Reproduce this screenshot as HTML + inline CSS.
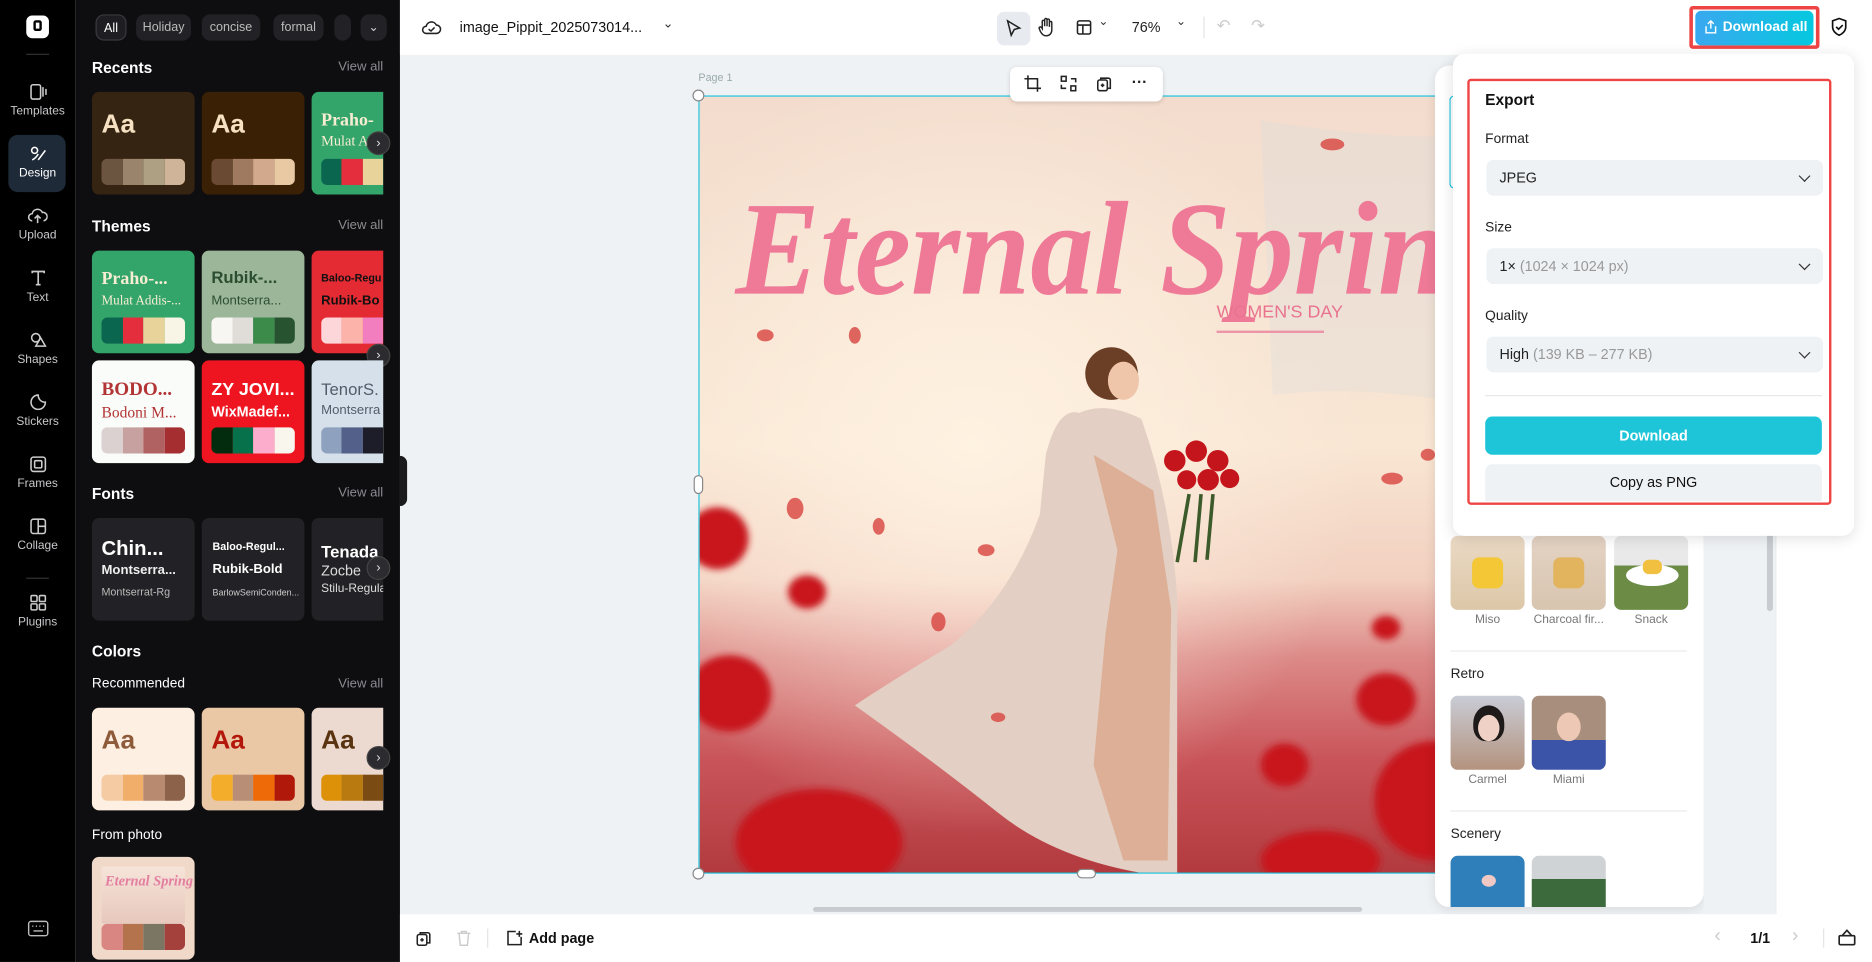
<!DOCTYPE html>
<html><head><meta charset="utf-8"><style>
*{box-sizing:border-box;margin:0;padding:0}
html,body{width:1872px;height:962px;overflow:hidden;background:#fff;font-family:"Liberation Sans",sans-serif}
#w{position:absolute;left:0;top:0;width:1568px;height:806px;transform:scale(1.19388,1.1935);transform-origin:0 0;background:#eff2f5;overflow:hidden}
.a{position:absolute}
.rail{left:0;top:0;width:63px;height:806px;background:#000}
.ri{position:absolute;left:0;width:63px;text-align:center;color:#c9c9cc;font-size:10px}
.ri svg{display:block;margin:0 auto 3px}
.pan{left:63px;top:0;width:272px;height:806px;background:#0e0e10;overflow:hidden}
.chip{position:absolute;top:12px;height:22px;border-radius:7px;background:#222226;color:#bbb;font-size:10.5px;line-height:22px;text-align:center}
.h{position:absolute;color:#fff;font-weight:bold;font-size:13px}
.va{position:absolute;right:14px;color:#8b8b92;font-size:11px}
.card{position:absolute;width:86px;height:86px;border-radius:6px;overflow:hidden}
.sw{position:absolute;left:8px;bottom:8px;width:70px;height:22px;border-radius:5px;overflow:hidden;display:flex}
.sw i{flex:1}
.arr{position:absolute;width:20px;height:20px;border-radius:50%;background:#2c2c30;border:1px solid #444;color:#ddd;font-size:11px;line-height:18px;text-align:center}
.top{left:335px;top:0;width:1233px;height:46px;background:#fff}
.bot{left:335px;top:766px;width:1233px;height:40px;background:#fff}
.sel{position:absolute;left:1245px;height:30px;width:282px;border-radius:6px;background:#eff2f5;font-size:12px;color:#222;line-height:30px;padding-left:11px}
.sel b{font-weight:normal;color:#999}
.sel:after{content:"";position:absolute;right:12px;top:10px;width:6px;height:6px;border-right:1.6px solid #333;border-bottom:1.6px solid #333;transform:rotate(45deg)}
.lbl{position:absolute;left:1244px;font-size:11.5px;color:#222}
.th{position:absolute;width:62px;height:62px;border-radius:6px}
.tl{position:absolute;width:62px;text-align:center;font-size:10px;color:#777}
</style></head><body><div id="w">

<div class="a rail">
 <div class="a" style="left:22px;top:13px;width:19px;height:19px;border-radius:5px;background:#fff"><div class="a" style="left:6px;top:4px;width:7px;height:9px;border:2px solid #000;border-radius:2px"></div></div>
 <div class="a" style="left:22px;top:45px;width:19px;height:1px;background:#333"></div>
 <div class="ri" style="top:69px"><svg width="16" height="16" viewBox="0 0 16 16" fill="none" stroke="#ccc" stroke-width="1.3"><rect x="2" y="2" width="8" height="12" rx="1.5"/><path d="M12 4v8M14.5 5.5v5"/></svg>Templates</div>
 <div class="a" style="left:7px;top:113px;width:48px;height:48px;border-radius:8px;background:#1e2a38"></div>
 <div class="ri" style="top:121px;color:#fff"><svg width="16" height="16" viewBox="0 0 16 16" fill="none" stroke="#fff" stroke-width="1.3"><circle cx="5" cy="5" r="2.5"/><path d="M8 13l6-8M3 13c2-1 4-3 5-5"/></svg>Design</div>
 <div class="ri" style="top:173px"><svg width="17" height="16" viewBox="0 0 17 16" fill="none" stroke="#ccc" stroke-width="1.3"><path d="M4 12a3 3 0 010-6 4.5 4.5 0 018.5-1 3 3 0 011 7M8.5 14V8M6 10l2.5-2.5L11 10"/></svg>Upload</div>
 <div class="ri" style="top:225px"><svg width="16" height="16" viewBox="0 0 16 16" fill="none" stroke="#ccc" stroke-width="1.4"><path d="M3 4V2.5h10V4M8 2.5v11M6 13.5h4"/></svg>Text</div>
 <div class="ri" style="top:277px"><svg width="16" height="16" viewBox="0 0 16 16" fill="none" stroke="#ccc" stroke-width="1.3"><circle cx="6" cy="6" r="3.5"/><path d="M10 6l4 7H6z"/></svg>Shapes</div>
 <div class="ri" style="top:329px"><svg width="16" height="16" viewBox="0 0 16 16" fill="none" stroke="#ccc" stroke-width="1.3"><path d="M8 2a6 6 0 106 6c-3 0-6-2-6-6z"/></svg>Stickers</div>
 <div class="ri" style="top:381px"><svg width="16" height="16" viewBox="0 0 16 16" fill="none" stroke="#ccc" stroke-width="1.3"><rect x="2" y="2" width="12" height="12" rx="2"/><rect x="5" y="5" width="6" height="6" rx="1"/></svg>Frames</div>
 <div class="ri" style="top:433px"><svg width="16" height="16" viewBox="0 0 16 16" fill="none" stroke="#ccc" stroke-width="1.3"><rect x="2" y="2" width="12" height="12" rx="2"/><path d="M8 2v12M8 8h6"/></svg>Collage</div>
 <div class="a" style="left:22px;top:484px;width:19px;height:1px;background:#333"></div>
 <div class="ri" style="top:497px"><svg width="16" height="16" viewBox="0 0 16 16" fill="none" stroke="#ccc" stroke-width="1.3"><rect x="2" y="2" width="5" height="5" rx="1"/><rect x="9" y="2" width="5" height="5" rx="1"/><rect x="2" y="9" width="5" height="5" rx="1"/><rect x="9" y="9" width="5" height="5" rx="1"/></svg>Plugins</div>
 <svg class="a" style="left:23px;top:771px" width="18" height="14" viewBox="0 0 18 14" fill="none" stroke="#bbb" stroke-width="1.2"><rect x="1" y="1" width="16" height="12" rx="2"/><path d="M4 5h1M7 5h1M10 5h1M13 5h1M5 9h8"/></svg>
</div>

<div class="a pan">
 <div class="chip" style="left:17px;width:26px;background:#1d1d22;border:1px solid #3a3a3e;color:#fff">All</div>
 <div class="chip" style="left:51px;width:46px">Holiday</div>
 <div class="chip" style="left:106px;width:49px">concise</div>
 <div class="chip" style="left:166px;width:42px">formal</div>
 <div class="chip" style="left:217px;width:14px"></div>
 <div class="chip" style="left:239px;width:22px;color:#ccc">&#8964;</div>
 <div class="h" style="left:14px;top:49px">Recents</div><div class="va" style="top:50px">View all</div>
 <div class="card" style="left:14px;top:77px;background:#362412"><div class="a" style="left:8px;top:14px;font-size:22px;font-weight:bold;color:#f6e2c2">Aa</div><div class="sw"><i style="background:#6b5440"></i><i style="background:#9a856c"></i><i style="background:#ada083"></i><i style="background:#d0b49a"></i></div></div>
 <div class="card" style="left:106px;top:77px;background:#3a2005"><div class="a" style="left:8px;top:14px;font-size:22px;font-weight:bold;color:#f6e2c2">Aa</div><div class="sw"><i style="background:#6b4a33"></i><i style="background:#a07a60"></i><i style="background:#d2a98c"></i><i style="background:#e8c9a4"></i></div></div>
 <div class="card" style="left:198px;top:77px;background:#34a56a;width:60px;border-radius:6px 0 0 6px"><div class="a" style="left:8px;top:16px;font:bold 15px 'Liberation Serif',serif;color:#f7edd3;white-space:nowrap">Praho-</div><div class="a" style="left:8px;top:34px;font:12px 'Liberation Serif',serif;color:#f7edd3;white-space:nowrap">Mulat Ad</div><div class="sw" style="width:52px;border-radius:5px 0 0 5px"><i style="background:#0a664e"></i><i style="background:#e52e3d"></i><i style="background:#e8d39a"></i></div></div>
 <div class="arr" style="left:244px;top:110px">&#8250;</div>
 <div class="h" style="left:14px;top:182px">Themes</div><div class="va" style="top:183px">View all</div>
 <div class="card" style="left:14px;top:210px;background:#34a56a"><div class="a" style="left:8px;top:16px;font:bold 15px 'Liberation Serif',serif;color:#f7edd3;white-space:nowrap">Praho-...</div><div class="a" style="left:8px;top:36px;font:11px 'Liberation Serif',serif;color:#f7edd3;white-space:nowrap">Mulat Addis-...</div><div class="sw"><i style="background:#0a664e"></i><i style="background:#e52e3d"></i><i style="background:#e8d39a"></i><i style="background:#f8f4e6"></i></div></div>
 <div class="card" style="left:106px;top:210px;background:#9cb69a"><div class="a" style="left:8px;top:14px;font-weight:bold;font-size:14px;color:#2c4e30;white-space:nowrap">Rubik-...</div><div class="a" style="left:8px;top:36px;font-size:11px;color:#2c4e30;white-space:nowrap">Montserra...</div><div class="sw"><i style="background:#f7f6f3"></i><i style="background:#e0ddd8"></i><i style="background:#3d8b4b"></i><i style="background:#275330"></i></div></div>
 <div class="card" style="left:198px;top:210px;background:#e42a33;width:60px;border-radius:6px 0 0 6px"><div class="a" style="left:8px;top:18px;font-weight:bold;font-size:9px;color:#111;white-space:nowrap">Baloo-Regu</div><div class="a" style="left:8px;top:36px;font-weight:bold;font-size:11px;color:#111;white-space:nowrap">Rubik-Bo</div><div class="sw" style="width:52px;border-radius:5px 0 0 5px"><i style="background:#fdd6d9"></i><i style="background:#fbb3aa"></i><i style="background:#f27ebf"></i></div></div>
 <div class="arr" style="left:244px;top:288px">&#8250;</div>
 <div class="card" style="left:14px;top:302px;background:#fafcfa"><div class="a" style="left:8px;top:16px;font:bold 16px 'Liberation Serif',serif;color:#b23434;white-space:nowrap">BODO...</div><div class="a" style="left:8px;top:36px;font:13px 'Liberation Serif',serif;color:#b23434;white-space:nowrap">Bodoni M...</div><div class="sw"><i style="background:#dbd1d0"></i><i style="background:#c6a19f"></i><i style="background:#b06263"></i><i style="background:#a52e31"></i></div></div>
 <div class="card" style="left:106px;top:302px;background:#ee1520"><div class="a" style="left:8px;top:16px;font-weight:bold;font-size:15px;color:#fff;white-space:nowrap">ZY JOVI...</div><div class="a" style="left:8px;top:36px;font-size:12px;color:#fff;white-space:nowrap;font-weight:bold">WixMadef...</div><div class="sw"><i style="background:#032c0e"></i><i style="background:#06714b"></i><i style="background:#fdadcc"></i><i style="background:#f9f6ee"></i></div></div>
 <div class="card" style="left:198px;top:302px;background:#d5e0ea;width:60px;border-radius:6px 0 0 6px"><div class="a" style="left:8px;top:16px;font-size:14px;color:#555b6a;white-space:nowrap">TenorS.</div><div class="a" style="left:8px;top:36px;font-size:11px;color:#555b6a;white-space:nowrap">Montserra</div><div class="sw" style="width:52px;border-radius:5px 0 0 5px"><i style="background:#8ea1bf"></i><i style="background:#536089"></i><i style="background:#1c1d28"></i></div></div>
 <div class="h" style="left:14px;top:406px">Fonts</div><div class="va" style="top:407px">View all</div>
 <div class="card" style="left:14px;top:434px;background:#222226"><div class="a" style="left:8px;top:16px;font-weight:bold;font-size:17px;color:#fff">Chin...</div><div class="a" style="left:8px;top:38px;font-size:11px;color:#eee;font-weight:bold">Montserra...</div><div class="a" style="left:8px;top:57px;font-size:9px;color:#bbb">Montserrat-Rg</div></div>
 <div class="card" style="left:106px;top:434px;background:#222226"><div class="a" style="left:9px;top:19px;font-weight:bold;font-size:9px;color:#fff">Baloo-Regul...</div><div class="a" style="left:9px;top:37px;font-weight:bold;font-size:11px;color:#fff">Rubik-Bold</div><div class="a" style="left:9px;top:58px;font-size:7.5px;color:#ccc">BarlowSemiConden...</div></div>
 <div class="card" style="left:198px;top:434px;background:#222226;width:60px;border-radius:6px 0 0 6px"><div class="a" style="left:8px;top:20px;font-weight:bold;font-size:14px;color:#fff;white-space:nowrap">Tenada</div><div class="a" style="left:8px;top:37px;font-size:12px;color:#ddd;white-space:nowrap">Zocbe</div><div class="a" style="left:8px;top:54px;font-size:10px;color:#ddd;white-space:nowrap">Stilu-Regula</div></div>
 <div class="arr" style="left:244px;top:466px">&#8250;</div>
 <div class="h" style="left:14px;top:538px">Colors</div>
 <div class="a" style="left:14px;top:567px;color:#fff;font-size:11.5px">Recommended</div><div class="va" style="top:567px">View all</div>
 <div class="card" style="left:14px;top:593px;background:#fdefe1"><div class="a" style="left:8px;top:14px;font-size:22px;font-weight:bold;color:#8d5a3a">Aa</div><div class="sw"><i style="background:#f5cba3"></i><i style="background:#f0ae6a"></i><i style="background:#b88a70"></i><i style="background:#8c624b"></i></div></div>
 <div class="card" style="left:106px;top:593px;background:#ebc8a5"><div class="a" style="left:8px;top:14px;font-size:22px;font-weight:bold;color:#b3170c">Aa</div><div class="sw"><i style="background:#f4ac2b"></i><i style="background:#b88f76"></i><i style="background:#ee6908"></i><i style="background:#b0190a"></i></div></div>
 <div class="card" style="left:198px;top:593px;background:#ecd9d0;width:60px;border-radius:6px 0 0 6px"><div class="a" style="left:8px;top:14px;font-size:22px;font-weight:bold;color:#5a3410">Aa</div><div class="sw" style="width:52px;border-radius:5px 0 0 5px"><i style="background:#dd9108"></i><i style="background:#b97b10"></i><i style="background:#7a4b13"></i></div></div>
 <div class="arr" style="left:244px;top:625px">&#8250;</div>
 <div class="a" style="left:14px;top:694px;color:#fff;font-size:11.5px">From photo</div>
 <div class="card" style="left:14px;top:718px;background:#f1d9c9"><div class="a" style="left:8px;top:8px;width:70px;height:48px;background:linear-gradient(#f6e4d9,#e7c8bd);border-radius:2px"></div><div class="a" style="left:11px;top:13px;font:italic bold 12px 'Liberation Serif',serif;color:#e37ea0">Eternal Spring</div><div class="sw"><i style="background:#d98682"></i><i style="background:#b4734c"></i><i style="background:#7a7663"></i><i style="background:#a5413c"></i></div></div>
</div>
<div class="a" style="left:335px;top:382px;width:6px;height:42px;background:#1b1b1e;border-radius:0 6px 6px 0"></div>

<div class="a top">
 <svg class="a" style="left:18px;top:15px" width="17" height="15" viewBox="0 0 17 15" fill="none" stroke="#222" stroke-width="1.3"><path d="M4 13a3 3 0 010-6 4.5 4.5 0 018.5-1 3 3 0 010 7z"/><path d="M6 9.5l2 1.5 3-3"/></svg>
 <div class="a" style="left:50px;top:16px;font-size:12px;color:#111">image_Pippit_2025073014...</div>
 <div class="a" style="left:220px;top:13px;font-size:11px;color:#333">&#8964;</div>
 <div class="a" style="left:500px;top:10px;width:28px;height:28px;border-radius:6px;background:#e7eaee"></div>
 <svg class="a" style="left:507px;top:16px" width="14" height="16" viewBox="0 0 14 16" fill="none" stroke="#222" stroke-width="1.3"><path d="M2 1.5l10 6-4.5 1.2L5 13.5z"/></svg>
 <svg class="a" style="left:534px;top:14px" width="16" height="18" viewBox="0 0 16 18" fill="none" stroke="#222" stroke-width="1.2"><path d="M4 10V4a1 1 0 012 0v4V2.5a1 1 0 012 0V8V3a1 1 0 012 0v5.5V5a1 1 0 012 0v6c0 3-2 5-4.5 5S4 15 2.5 12.5L1.5 10a1 1 0 012-.8z"/></svg>
 <svg class="a" style="left:566px;top:16px" width="14" height="14" viewBox="0 0 14 14" fill="none" stroke="#222" stroke-width="1.3"><rect x="1.5" y="1.5" width="11" height="11" rx="1.5"/><path d="M1.5 5h11M6 5v7.5"/></svg>
 <div class="a" style="left:585px;top:13px;font-size:10px;color:#333">&#8964;</div>
 <div class="a" style="left:613px;top:16px;font-size:12px;color:#222">76%</div>
 <div class="a" style="left:650px;top:13px;font-size:10px;color:#333">&#8964;</div>
 <div class="a" style="left:673px;top:14px;width:1px;height:18px;background:#e2e4e8"></div>
 <div class="a" style="left:684px;top:13px;font-size:14px;color:#ccc">&#8630;</div>
 <div class="a" style="left:713px;top:13px;font-size:14px;color:#ccc">&#8631;</div>
 <div class="a" style="left:1080px;top:5px;width:109px;height:36px;border:3px solid #ef4444;border-radius:3px"></div>
 <div class="a" style="left:1085px;top:9px;width:99px;height:29px;border-radius:5px;background:linear-gradient(90deg,#3aa8ef,#05c8df);color:#fff;font-size:11.5px;font-weight:bold;line-height:29px;padding-left:23px">Download all</div>
 <svg class="a" style="left:1092px;top:16px" width="12" height="13" viewBox="0 0 12 13" fill="none" stroke="#fff" stroke-width="1.2"><path d="M6 8V1.5M3.5 4L6 1.5 8.5 4M2 6v5.5h8V6"/></svg>
 <svg class="a" style="left:1198px;top:14px" width="15" height="17" viewBox="0 0 15 17" fill="none" stroke="#111" stroke-width="1.4"><path d="M7.5 1.5l5.5 2v5c0 3.5-3 6-5.5 7-2.5-1-5.5-3.5-5.5-7v-5z"/><path d="M5 8.5l2 2 3.5-3.5"/></svg>
</div>

<div class="a" style="left:585px;top:60px;font-size:9px;color:#9aa">Page 1</div>
<div class="a" style="left:585px;top:80px;width:652px;height:652px;overflow:hidden;border:1.5px solid #14c0da">
<svg width="652" height="652" viewBox="0 0 652 652">
 <defs>
  <linearGradient id="sky" x1="0" y1="0" x2="0" y2="1"><stop offset="0" stop-color="#f3dccd"/><stop offset=".45" stop-color="#f9e6d3"/><stop offset=".62" stop-color="#f2d0c0"/><stop offset=".72" stop-color="#dc8a88"/><stop offset=".85" stop-color="#c9555a"/><stop offset="1" stop-color="#b23a3e"/></linearGradient>
  <radialGradient id="sun" cx=".35" cy=".45" r=".5"><stop offset="0" stop-color="#fff3e3" stop-opacity=".9"/><stop offset="1" stop-color="#fff3e3" stop-opacity="0"/></radialGradient>
  <filter id="bl"><feGaussianBlur stdDeviation="3"/></filter>
 </defs>
 <rect width="652" height="652" fill="url(#sky)"/>
 <rect width="652" height="652" fill="url(#sun)"/>
 <path d="M470 20 Q600 40 652 30 L652 260 Q560 240 480 250z" fill="#dcdcdc" opacity=".35"/>
 <path d="M318 265 Q300 260 290 300 L285 350 Q260 420 210 460 Q160 490 130 510 Q200 560 250 600 Q300 640 380 652 L400 652 L400 420 Q395 340 370 270 Q340 255 318 265z" fill="#e3cfc3"/>
 <path d="M330 300 L350 380 L340 450 L330 560 L355 640 L392 640 L395 430 L380 330z" fill="#d99a78" opacity=".6"/>
 <circle cx="345" cy="232" r="22" fill="#6b3e26"/>
 <ellipse cx="355" cy="238" rx="13" ry="16" fill="#f0c6aa"/>
 <g fill="#c4141c"><circle cx="398" cy="305" r="9"/><circle cx="416" cy="297" r="9"/><circle cx="434" cy="305" r="9"/><circle cx="426" cy="321" r="9"/><circle cx="408" cy="321" r="8"/><circle cx="444" cy="320" r="8"/></g>
 <path d="M410 333 L400 390 M420 333 L415 390 M430 333 L425 388" stroke="#3c5a2a" stroke-width="3"/>
 <g fill="#c8151e" filter="url(#bl)"><ellipse cx="15" cy="370" rx="26" ry="26"/><ellipse cx="90" cy="415" rx="16" ry="14"/><ellipse cx="25" cy="500" rx="35" ry="32"/><ellipse cx="100" cy="625" rx="70" ry="45"/><ellipse cx="575" cy="505" rx="25" ry="22"/><ellipse cx="615" cy="590" rx="50" ry="50"/><ellipse cx="490" cy="560" rx="20" ry="18"/><ellipse cx="520" cy="640" rx="50" ry="25"/><ellipse cx="575" cy="445" rx="12" ry="10"/></g>
 <g fill="#d8443f" opacity=".8"><ellipse cx="55" cy="200" rx="7" ry="5"/><ellipse cx="130" cy="200" rx="5" ry="7"/><ellipse cx="80" cy="345" rx="7" ry="9"/><ellipse cx="150" cy="360" rx="5" ry="7"/><ellipse cx="200" cy="440" rx="6" ry="8"/><ellipse cx="580" cy="320" rx="9" ry="5"/><ellipse cx="610" cy="300" rx="6" ry="5"/><ellipse cx="530" cy="40" rx="10" ry="5"/><ellipse cx="240" cy="380" rx="7" ry="5"/><ellipse cx="250" cy="520" rx="6" ry="4"/></g>
 <text x="30" y="165" font-family="Liberation Serif,serif" font-style="italic" font-weight="bold" font-size="112" fill="#ee7a98" textLength="650" lengthAdjust="spacingAndGlyphs">Eternal Spring</text>
 <text x="433" y="185" font-family="Liberation Sans,sans-serif" font-size="15" fill="#e9738f">WOMEN'S DAY</text>
 <rect x="433" y="196" width="90" height="2" fill="#ec94a8"/>
</svg></div>
<div class="a" style="left:580px;top:75px;width:10px;height:10px;border-radius:50%;background:#fff;border:1px solid #888"></div>
<div class="a" style="left:580px;top:727px;width:10px;height:10px;border-radius:50%;background:#fff;border:1px solid #888"></div>
<div class="a" style="left:581px;top:398px;width:8px;height:16px;border-radius:4px;background:#fff;border:1px solid #888"></div>
<div class="a" style="left:902px;top:728px;width:16px;height:8px;border-radius:4px;background:#fff;border:1px solid #888"></div>
<div class="a" style="left:846px;top:56px;width:128px;height:29px;border-radius:6px;background:#fff;box-shadow:0 1px 4px rgba(0,0,0,.15)"></div>
<svg class="a" style="left:858px;top:63px" width="14" height="14" viewBox="0 0 14 14" fill="none" stroke="#222" stroke-width="1.3"><path d="M3 0v11h11M0 3h11v11"/></svg>
<svg class="a" style="left:888px;top:63px" width="14" height="14" viewBox="0 0 14 14" fill="none" stroke="#222" stroke-width="1.3"><rect x="1" y="1" width="4" height="4"/><rect x="9" y="9" width="4" height="4"/><path d="M9 3h4v3M5 11H1V8"/></svg>
<svg class="a" style="left:918px;top:63px" width="14" height="14" viewBox="0 0 14 14" fill="none" stroke="#222" stroke-width="1.3"><rect x="1.5" y="4" width="8" height="9" rx="1.5"/><path d="M4 4V2.5h6.5a1.5 1.5 0 011.5 1.5v7H10M5.5 7v3M4 8.5h3"/></svg>
<div class="a" style="left:948px;top:61px;font-size:13px;color:#222;font-weight:bold">···</div>

<div class="a" style="left:1202px;top:55px;width:225px;height:705px;background:#fff;border-radius:12px;box-shadow:0 2px 10px rgba(0,0,0,.1)"></div>
<div class="a" style="left:1214px;top:80px;width:4px;height:78px;border:1px solid #14c0da;border-right:none;border-radius:6px 0 0 6px"></div>
<div class="a" style="left:1427px;top:46px;width:60px;height:720px;background:#eff2f5"></div>
<div class="a" style="left:1487px;top:46px;width:81px;height:720px;background:#fff;border-left:1px solid #e8ebee"></div>
<div class="a" style="left:1480px;top:430px;width:5px;height:82px;border-radius:3px;background:#c8ccd0"></div>
<div class="th" style="left:1215px;top:449px;background:linear-gradient(#ead9c4,#dcc7a8)"><div class="a" style="left:18px;top:18px;width:26px;height:26px;border-radius:6px;background:#f3c736"></div></div>
<div class="th" style="left:1283px;top:449px;background:linear-gradient(#e4d3c4,#d8c5b0)"><div class="a" style="left:18px;top:18px;width:26px;height:26px;border-radius:6px;background:#e3b45e"></div></div>
<div class="th" style="left:1352px;top:449px;background:linear-gradient(#e9e9ea 40%,#6c8c46 40%)"><div class="a" style="left:10px;top:24px;width:44px;height:18px;border-radius:50%;background:#fff"></div><div class="a" style="left:24px;top:20px;width:16px;height:12px;border-radius:5px;background:#f2c040"></div></div>
<div class="tl" style="left:1215px;top:514px">Miso</div><div class="tl" style="left:1283px;top:514px">Charcoal fir...</div><div class="tl" style="left:1352px;top:514px">Snack</div>
<div class="a" style="left:1215px;top:545px;width:198px;height:1px;background:#e8eaed"></div>
<div class="a" style="left:1215px;top:559px;font-size:11.5px;color:#222">Retro</div>
<div class="th" style="left:1215px;top:583px;background:linear-gradient(#c9ccd6,#b4937e)"><div class="a" style="left:19px;top:8px;width:26px;height:30px;border-radius:50% 50% 40% 40%;background:#1e1a1a"></div><div class="a" style="left:23px;top:16px;width:18px;height:22px;border-radius:50%;background:#efd2c5"></div></div>
<div class="th" style="left:1283px;top:583px;background:linear-gradient(#a88e7c 60%,#3b54a8 60%)"><div class="a" style="left:21px;top:14px;width:20px;height:24px;border-radius:50%;background:#edc8b5"></div></div>
<div class="tl" style="left:1215px;top:648px">Carmel</div><div class="tl" style="left:1283px;top:648px">Miami</div>
<div class="a" style="left:1215px;top:679px;width:198px;height:1px;background:#e8eaed"></div>
<div class="a" style="left:1215px;top:693px;font-size:11.5px;color:#222">Scenery</div>
<div class="a" style="left:1215px;top:717px;width:62px;height:43px;border-radius:6px 6px 0 0;background:#2f7fbb"></div>
<div class="a" style="left:1283px;top:717px;width:62px;height:43px;border-radius:6px 6px 0 0;background:linear-gradient(#cfd3d6 45%,#3d6a3c 45%)"></div>
<div class="a" style="left:1241px;top:733px;width:12px;height:10px;border-radius:50%;background:#f0c8c4"></div>

<div class="a" style="left:1217px;top:45px;width:336px;height:404px;background:#fff;border-radius:10px;box-shadow:0 2px 12px rgba(0,0,0,.12)"></div>
<div class="a" style="left:1229px;top:66px;width:305px;height:357px;border:2.5px solid #ef4444;border-radius:3px"></div>
<div class="a" style="left:1244px;top:76px;font-size:13px;font-weight:bold;color:#111">Export</div>
<div class="lbl" style="top:111px">Format</div>
<div class="sel" style="top:134px">JPEG</div>
<div class="lbl" style="top:185px">Size</div>
<div class="sel" style="top:208px">1× <b>(1024 × 1024 px)</b></div>
<div class="lbl" style="top:259px">Quality</div>
<div class="sel" style="top:282px">High <b>(139 KB – 277 KB)</b></div>
<div class="a" style="left:1244px;top:331px;width:282px;height:1px;background:#e6e8eb"></div>
<div class="a" style="left:1244px;top:349px;width:282px;height:32px;border-radius:6px;background:#1ec5d8;color:#fff;font-size:12px;font-weight:bold;text-align:center;line-height:32px">Download</div>
<div class="a" style="left:1244px;top:389px;width:282px;height:31px;border-radius:6px 6px 0 0;background:#eff2f5;color:#111;font-size:12px;text-align:center;line-height:31px">Copy as PNG</div>

<div class="a bot">
 <div class="a" style="left:346px;top:-6px;width:460px;height:4px;border-radius:2px;background:#c8ccd0"></div>
 <svg class="a" style="left:13px;top:13px" width="14" height="14" viewBox="0 0 14 14" fill="none" stroke="#222" stroke-width="1.3"><rect x="1.5" y="4" width="8" height="9" rx="1.5"/><path d="M4 4V2.5h6.5a1.5 1.5 0 011.5 1.5v7H10M5.5 7v3M4 8.5h3"/></svg>
 <svg class="a" style="left:47px;top:13px" width="13" height="14" viewBox="0 0 13 14" fill="none" stroke="#ccc" stroke-width="1.2"><path d="M1 3h11M4.5 3V1.5h4V3M2.5 3l1 10h6l1-10"/></svg>
 <div class="a" style="left:73px;top:12px;width:1px;height:16px;background:#e2e4e8"></div>
 <svg class="a" style="left:89px;top:13px" width="14" height="14" viewBox="0 0 14 14" fill="none" stroke="#222" stroke-width="1.3"><path d="M8 1.5H1.5v11h11V6M11 1v5M8.5 3.5h5"/></svg>
 <div class="a" style="left:108px;top:13px;font-size:12px;color:#111;font-weight:bold">Add page</div>
 <div class="a" style="left:1101px;top:10px;font-size:16px;color:#ccc">&#8249;</div>
 <div class="a" style="left:1131px;top:13px;font-size:12px;color:#111;font-weight:bold">1/1</div>
 <div class="a" style="left:1166px;top:10px;font-size:16px;color:#ccc">&#8250;</div>
 <div class="a" style="left:1192px;top:12px;width:1px;height:16px;background:#e2e4e8"></div>
 <svg class="a" style="left:1204px;top:12px" width="16" height="15" viewBox="0 0 16 15" fill="none" stroke="#222" stroke-width="1.4"><rect x="1.5" y="6" width="13" height="7.5" rx="1"/><path d="M4 6l4-4.5 4 4.5"/></svg>
</div>
</div></body></html>
